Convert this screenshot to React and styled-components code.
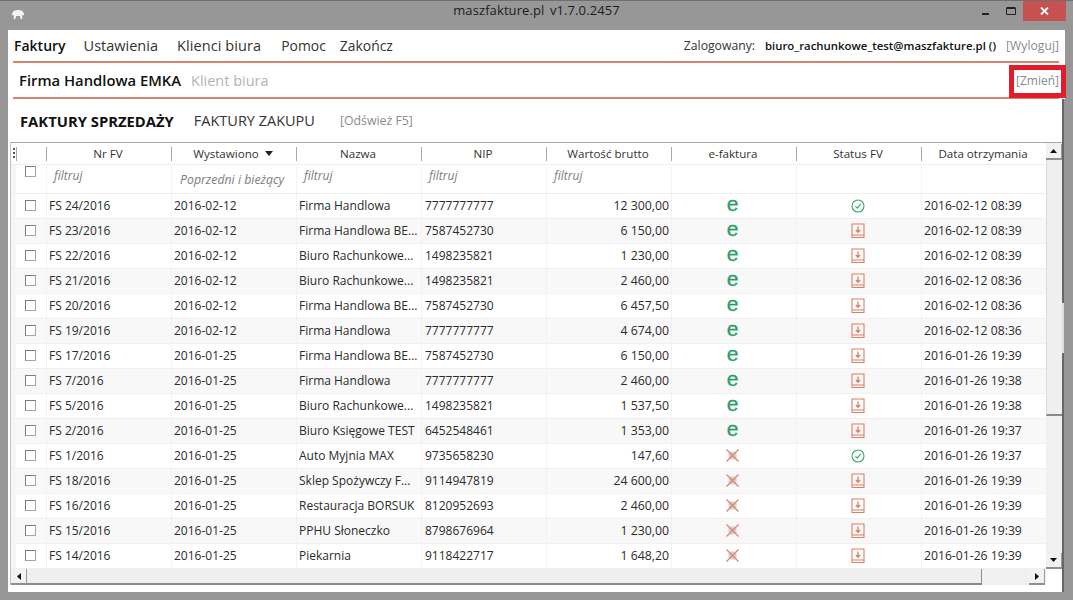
import styled, { createGlobalStyle } from "styled-components"

const rows = [
	["FS 24/2016", "2016-02-12", "Firma Handlowa", "7777777777", "12 300,00", "e", "ok", "2016-02-12 08:39"],
	["FS 23/2016", "2016-02-12", "Firma Handlowa BE...", "7587452730", "6 150,00", "e", "down", "2016-02-12 08:39"],
	["FS 22/2016", "2016-02-12", "Biuro Rachunkowe...", "1498235821", "1 230,00", "e", "down", "2016-02-12 08:39"],
	["FS 21/2016", "2016-02-12", "Biuro Rachunkowe...", "1498235821", "2 460,00", "e", "down", "2016-02-12 08:36"],
	["FS 20/2016", "2016-02-12", "Firma Handlowa BE...", "7587452730", "6 457,50", "e", "down", "2016-02-12 08:36"],
	["FS 19/2016", "2016-02-12", "Firma Handlowa", "7777777777", "4 674,00", "e", "down", "2016-02-12 08:36"],
	["FS 17/2016", "2016-01-25", "Firma Handlowa BE...", "7587452730", "6 150,00", "e", "down", "2016-01-26 19:39"],
	["FS 7/2016", "2016-01-25", "Firma Handlowa", "7777777777", "2 460,00", "e", "down", "2016-01-26 19:38"],
	["FS 5/2016", "2016-01-25", "Biuro Rachunkowe...", "1498235821", "1 537,50", "e", "down", "2016-01-26 19:38"],
	["FS 2/2016", "2016-01-25", "Biuro Księgowe TEST", "6452548461", "1 353,00", "e", "down", "2016-01-26 19:37"],
	["FS 1/2016", "2016-01-25", "Auto Myjnia MAX", "9735658230", "147,60", "x", "ok", "2016-01-26 19:37"],
	["FS 18/2016", "2016-01-25", "Sklep Spożywczy F...", "9114947819", "24 600,00", "x", "down", "2016-01-26 19:39"],
	["FS 16/2016", "2016-01-25", "Restauracja BORSUK", "8120952693", "2 460,00", "x", "down", "2016-01-26 19:39"],
	["FS 15/2016", "2016-01-25", "PPHU Słoneczko", "8798676964", "1 230,00", "x", "down", "2016-01-26 19:39"],
	["FS 14/2016", "2016-01-25", "Piekarnia", "9118422717", "1 648,20", "x", "down", "2016-01-26 19:39"],
]

const Global = createGlobalStyle`
	*, *::before, *::after {
		box-sizing: border-box;
	}
	html, body {
		margin: 0;
		padding: 0;
		background: #979797;
	}
	body {
		font-family: "Open Sans", "Noto Sans", sans-serif;
		color: #2b2b2b;
	}
`

const Window = styled.div`
	position: relative;
	width: 1073px;
	height: 600px;
	padding: 0 8px 8px 8px;
	background: #979797;
	border-top: 1px solid #6f6f6f;
	display: flex;
	flex-direction: column;
	overflow: hidden;
`
const TitleBar = styled.div`
	height: 29px;
	flex: none;
	display: flex;
	justify-content: center;
	font-size: 13px;
	line-height: 18px;
	color: #1d1d1d;
	letter-spacing: 0.1px;
	word-spacing: 2px;
`
const AppIcon = styled.svg`
	position: absolute;
	left: 11px;
	top: 8px;
`
const WinControls = styled.div`
	position: absolute;
	top: 0;
	right: 7px;
	display: flex;
	align-items: flex-start;
`
const WinButton = styled.div`
	width: ${p => p.$w}px;
	height: 20px;
	display: flex;
	align-items: center;
	justify-content: center;
	background: ${p => p.$bg || "transparent"};
`
const Content = styled.div`
	flex: 1;
	display: flex;
	flex-direction: column;
	min-height: 0;
`
const TopPart = styled.div`
	flex: none;
	background: #fff;
`
const LowerPart = styled.div`
	position: relative;
	flex: 1;
	min-height: 0;
	margin-right: 1px;
	background: #fff;
	border-right: 2px solid #6d6170;
	&::after {
		content: "";
		position: absolute;
		right: -2px;
		top: 204px;
		width: 2px;
		height: 50px;
		background: #dcdcdc;
	}
`
const Menu = styled.div`
	height: 31px;
	display: flex;
	align-items: center;
	padding: 0 6px 1px 6px;
	font-size: 14.5px;
`
const MenuItem = styled.span`
	font-weight: ${p => (p.$active ? 600 : 400)};
	font-size: ${p => p.$size || 14.5}px;
	color: ${p => (p.$active ? "#111" : "#333")};
	margin-right: ${p => p.$gap || 0}px;
	letter-spacing: ${p => p.$track || 0}px;
`
const Login = styled.div`
	margin-left: auto;
	display: flex;
	align-items: center;
	font-size: 12.2px;
	color: #333;
`
const LoginMail = styled.span`
	font-weight: 600;
	font-size: 11.4px;
	color: #111;
	margin: 0 10px;
`
const Bracket = styled.span`
	color: #8b8b8b;
	font-size: ${p => p.$size || 12}px;
`
const Rule = styled.div`
	height: 2px;
	margin: 0 6px 0 5px;
	background: #d9826a;
`
const ClientBar = styled.div`
	height: 34px;
	display: flex;
	align-items: center;
	padding: 0 6px 0 11px;
	font-size: 14.5px;
`
const ClientName = styled.span`
	font-weight: 600;
	font-size: 14.8px;
	color: #111;
	margin-right: 10px;
`
const ClientHint = styled.span`
	color: #b4b4b4;
`
const Highlight = styled.div`
	position: absolute;
	left: 1009px;
	top: 64px;
	width: 57px;
	height: 33px;
	border: 5px solid #e31c2c;
`
const Tabs = styled.div`
	height: 43px;
	display: flex;
	align-items: center;
	padding: 0 0 0 12px;
	font-size: 14.5px;
`
const Tab = styled.span`
	font-weight: ${p => (p.$active ? 700 : 400)};
	font-size: ${p => (p.$active ? "14.8px" : "inherit")};
	color: ${p => (p.$active ? "#111" : "#333")};
	margin-right: ${p => p.$gap}px;
`
const Grid = styled.div`
	height: 443px;
	margin-left: 2px;
	border-top: 1px solid #a8a8a8;
	border-left: 1px solid #c4c4c4;
	display: grid;
	grid-template-columns: 1fr 16px;
	grid-template-rows: 1fr 16px;
	font-size: 12px;
`
const Table = styled.div`
	min-width: 0;
	overflow: hidden;
`
const Row = styled.div`
	display: grid;
	grid-template-columns: 5px 30px repeat(8, 125px);
	height: ${p => p.$h}px;
	background: ${p => (p.$alt ? "#f8f8f8" : "#fff")};
	border-bottom: 1px solid ${p => (p.$alt ? "#f1f1f1" : "#efefef")};
`
const Grip = styled.div`
	display: flex;
	align-items: center;
	justify-content: center;
`
const GripDots = styled.i`
	display: block;
	width: 2px;
	height: 12px;
	background: repeating-linear-gradient(#555 0 2px, transparent 2px 4px);
`
const RowHead = styled.div`
	background: #f6f6f6;
`
const HeadCell = styled.div`
	position: relative;
	display: flex;
	align-items: center;
	justify-content: center;
	gap: 6px;
	padding-right: 1px;
	color: #333;
	font-size: 11.6px;
	&::before {
		content: "";
		position: absolute;
		left: 0;
		top: 4px;
		bottom: 3px;
		width: 1px;
		background: #a9a9a9;
	}
`
const SortArrow = styled.i`
	width: 0;
	height: 0;
	border-left: 4.5px solid transparent;
	border-right: 4.5px solid transparent;
	border-top: 5px solid #222;
`
const FilterCell = styled.div`
	padding: ${p => (p.$low ? "6px 0 0 8px" : "2px 0 0 7px")};
	color: #7d7d7d;
	font-size: ${p => (p.$low ? 12.3 : 12)}px;
	font-style: italic;
	white-space: nowrap;
	overflow: hidden;
	border-left: 1px solid #f5f5f5;
`
const Cell = styled.div`
	display: flex;
	align-items: center;
	justify-content: ${p => p.$align || "flex-start"};
	padding: ${p => p.$pad || "0 0 1px 2px"};
	font-size: ${p => p.$size || 12}px;
	border-left: 1px solid #f3f3f3;
	white-space: nowrap;
	overflow: hidden;
	color: #2b2b2b;
`
const IconCell = styled.div`
	display: flex;
	align-items: center;
	justify-content: center;
	padding: ${p => p.$pad};
	border-left: 1px solid #f3f3f3;
`
const CheckCell = styled.div`
	display: flex;
	justify-content: center;
	align-items: ${p => (p.$top ? "flex-start" : "center")};
	padding-top: ${p => (p.$top ? 1 : 0)}px;
	padding-bottom: ${p => (p.$top ? 0 : 1)}px;
	padding-right: 1px;
`
const Check = styled.i`
	display: block;
	width: 11px;
	height: 11px;
	border: 1px solid #a5a5a5;
	border-top-color: #7c7c7c;
	border-left-color: #7c7c7c;
	background: #fff;
`
const ELetter = styled.span`
	font-family: "Liberation Sans", sans-serif;
	font-size: 21px;
	line-height: 18px;
	color: #2a9d6a;
	-webkit-text-stroke: 0.3px #2a9d6a;
`
const VBar = styled.div`
	background: #f0f0f0;
	padding-top: 1px;
	display: flex;
	flex-direction: column;
`
const ScrollBtn = styled.div`
	flex: none;
	width: 16px;
	height: 16px;
	margin-right: ${p => p.$mr || 0}px;
	display: flex;
	align-items: center;
	justify-content: center;
	background: #f2f2f2;
	border-right: 1px solid #9a9a9a;
	border-bottom: 2px solid #8f8f8f;
`
const VThumb = styled.div`
	flex: none;
	height: 256px;
	background: #efefef;
	border-left: 1px solid #dcdcdc;
	border-bottom: 2px solid #8a8a8a;
`
const Spacer = styled.div`
	flex: 1;
`
const HBar = styled.div`
	display: flex;
	background: #f0f0f0;
`
const HThumb = styled.div`
	width: 955px;
	background: #efefef;
	border-right: 1px solid #8f8f8f;
	border-bottom: 2px solid #8a8a8a;
`
const Corner = styled.div`
	background: #fff;
`

const OkIcon = () => (
	<svg width="14" height="14" viewBox="0 0 14 14" fill="none" stroke="#3aa873" strokeWidth="1.1">
		<circle cx="7" cy="7" r="6" />
		<path d="M4.4 7.2 6.3 9.2 9.8 4.8" />
	</svg>
)

const DownIcon = () => (
	<svg width="14" height="16" viewBox="0 0 14 16" fill="none" stroke="#dc7f63" strokeWidth="1.1">
		<path d="M1 1h12v13.5H1zM1 12h12" />
		<path d="M7 3.5v5.5M4.8 7 7 9.3 9.2 7" strokeWidth="1.3" />
	</svg>
)

const NoEIcon = () => (
	<svg width="15" height="15" viewBox="0 0 15 15" fill="none">
		<rect x="3.5" y="3.5" width="8" height="8" rx="2.5" fill="#d2d2d2" />
		<path d="M1.5 1.5 13.5 13.5M13.5 1.5 1.5 13.5" stroke="#dd8469" strokeWidth="1.3" />
	</svg>
)

const Triangle = ({ dir }) => {
	const paths = {
		up: "M0 4 3.5 0 7 4z",
		down: "M0 0h7L3.5 4z",
		left: "M4 0v7L0 3.5z",
		right: "M0 0v7l4-3.5z",
	}
	const vertical = dir === "up" || dir === "down"
	return (
		<svg width={vertical ? 7 : 4} height={vertical ? 4 : 7} viewBox={vertical ? "0 0 7 4" : "0 0 4 7"}>
			<path d={paths[dir]} fill="#111" />
		</svg>
	)
}

const columns = ["Nr FV", "Wystawiono", "Nazwa", "NIP", "Wartość brutto", "e-faktura", "Status FV", "Data otrzymania"]

const App = () => {
	return (
		<>
			<Global />
			<Window>
				<AppIcon width="14" height="11" viewBox="0 0 14 11" fill="#f4f4f4">
					<path d="M1 4.5C2 2 4 1 7 1s5 1 6 3.5l-.6 2.2-1.4-.6L11.4 10H9.6L8.8 7H5.2l-.8 3H2.6L3 6.1l-1.4.6z" />
				</AppIcon>
				<TitleBar>maszfakture.pl v1.7.0.2457</TitleBar>
				<WinControls>
					<WinButton $w={26}>
						<svg width="7" height="9" viewBox="0 0 7 9"><path d="M0 6h7v2H0z" fill="#222" /></svg>
					</WinButton>
					<WinButton $w={25}>
						<svg width="10" height="8" viewBox="0 0 10 8" fill="none" stroke="#222"><path d="M.5 1.5h9v6h-9z" /><path d="M.5 1h9" strokeWidth="2" /></svg>
					</WinButton>
					<WinButton $w={43} $bg="#c75050">
						<svg width="9" height="8" viewBox="0 0 9 8" stroke="#fff" strokeWidth="1.8"><path d="M1 .5l7 7M8 .5l-7 7" /></svg>
					</WinButton>
				</WinControls>
				<Content>
					<TopPart>
						<Menu>
							<MenuItem $active $size={14} $gap={18}>Faktury</MenuItem>
							<MenuItem $gap={19}>Ustawienia</MenuItem>
							<MenuItem $gap={20} $track={0.1}>Klienci biura</MenuItem>
							<MenuItem $size={13.9} $gap={14}>Pomoc</MenuItem>
							<MenuItem $size={13.9}>Zakończ</MenuItem>
							<Login>
								Zalogowany:
								<LoginMail>biuro_rachunkowe_test@maszfakture.pl ()</LoginMail>
								<Bracket $size={12.2}>[Wyloguj]</Bracket>
							</Login>
						</Menu>
						<Rule />
						<ClientBar>
							<ClientName>Firma Handlowa EMKA</ClientName>
							<ClientHint>Klient biura</ClientHint>
							<Spacer />
							<Bracket>[Zmień]</Bracket>
						</ClientBar>
						<Rule />
					</TopPart>
					<LowerPart>
						<Tabs>
							<Tab $active $gap={20}>FAKTURY SPRZEDAŻY</Tab>
							<Tab $gap={25}>FAKTURY ZAKUPU</Tab>
							<Bracket $size={12.3}>[Odśwież F5]</Bracket>
						</Tabs>
						<Grid>
							<Table>
								<Row $h={22}>
									<Grip><GripDots /></Grip>
									<HeadCell />
									{columns.map(c => (
										<HeadCell key={c}>
											{c}
											{c === "Wystawiono" && <SortArrow />}
										</HeadCell>
									))}
								</Row>
								<Row $h={29}>
									<RowHead />
									<CheckCell $top><Check /></CheckCell>
									<FilterCell>filtruj</FilterCell>
									<FilterCell $low>Poprzedni i bieżący</FilterCell>
									<FilterCell>filtruj</FilterCell>
									<FilterCell>filtruj</FilterCell>
									<FilterCell>filtruj</FilterCell>
									<FilterCell />
									<FilterCell />
									<FilterCell />
								</Row>
								{rows.map((r, i) => (
									<Row key={r[0]} $h={25} $alt={i % 2 === 1}>
										<RowHead />
										<CheckCell><Check /></CheckCell>
										<Cell>{r[0]}</Cell>
										<Cell>{r[1]}</Cell>
										<Cell>{r[2]}</Cell>
										<Cell $pad="0 0 1px 3px">{r[3]}</Cell>
										<Cell $align="flex-end" $pad="0 2px 1px 0" $size={12.3}>{r[4]}</Cell>
										{r[5] === "e" ? (
											<IconCell $pad="0 3px 5px 0"><ELetter>e</ELetter></IconCell>
										) : (
											<IconCell $pad="0 3px 1px 0"><NoEIcon /></IconCell>
										)}
										<IconCell $pad="0 2px 1px 0">{r[6] === "ok" ? <OkIcon /> : <DownIcon />}</IconCell>
										<Cell $size={12.2}>{r[7]}</Cell>
									</Row>
								))}
							</Table>
							<VBar>
								<ScrollBtn><Triangle dir="up" /></ScrollBtn>
								<VThumb />
								<Spacer />
								<ScrollBtn><Triangle dir="down" /></ScrollBtn>
							</VBar>
							<HBar>
								<ScrollBtn><Triangle dir="left" /></ScrollBtn>
								<HThumb />
								<Spacer />
								<ScrollBtn $mr={1}><Triangle dir="right" /></ScrollBtn>
							</HBar>
							<Corner />
						</Grid>
					</LowerPart>
				</Content>
				<Highlight />
			</Window>
		</>
	)
}

export default App
